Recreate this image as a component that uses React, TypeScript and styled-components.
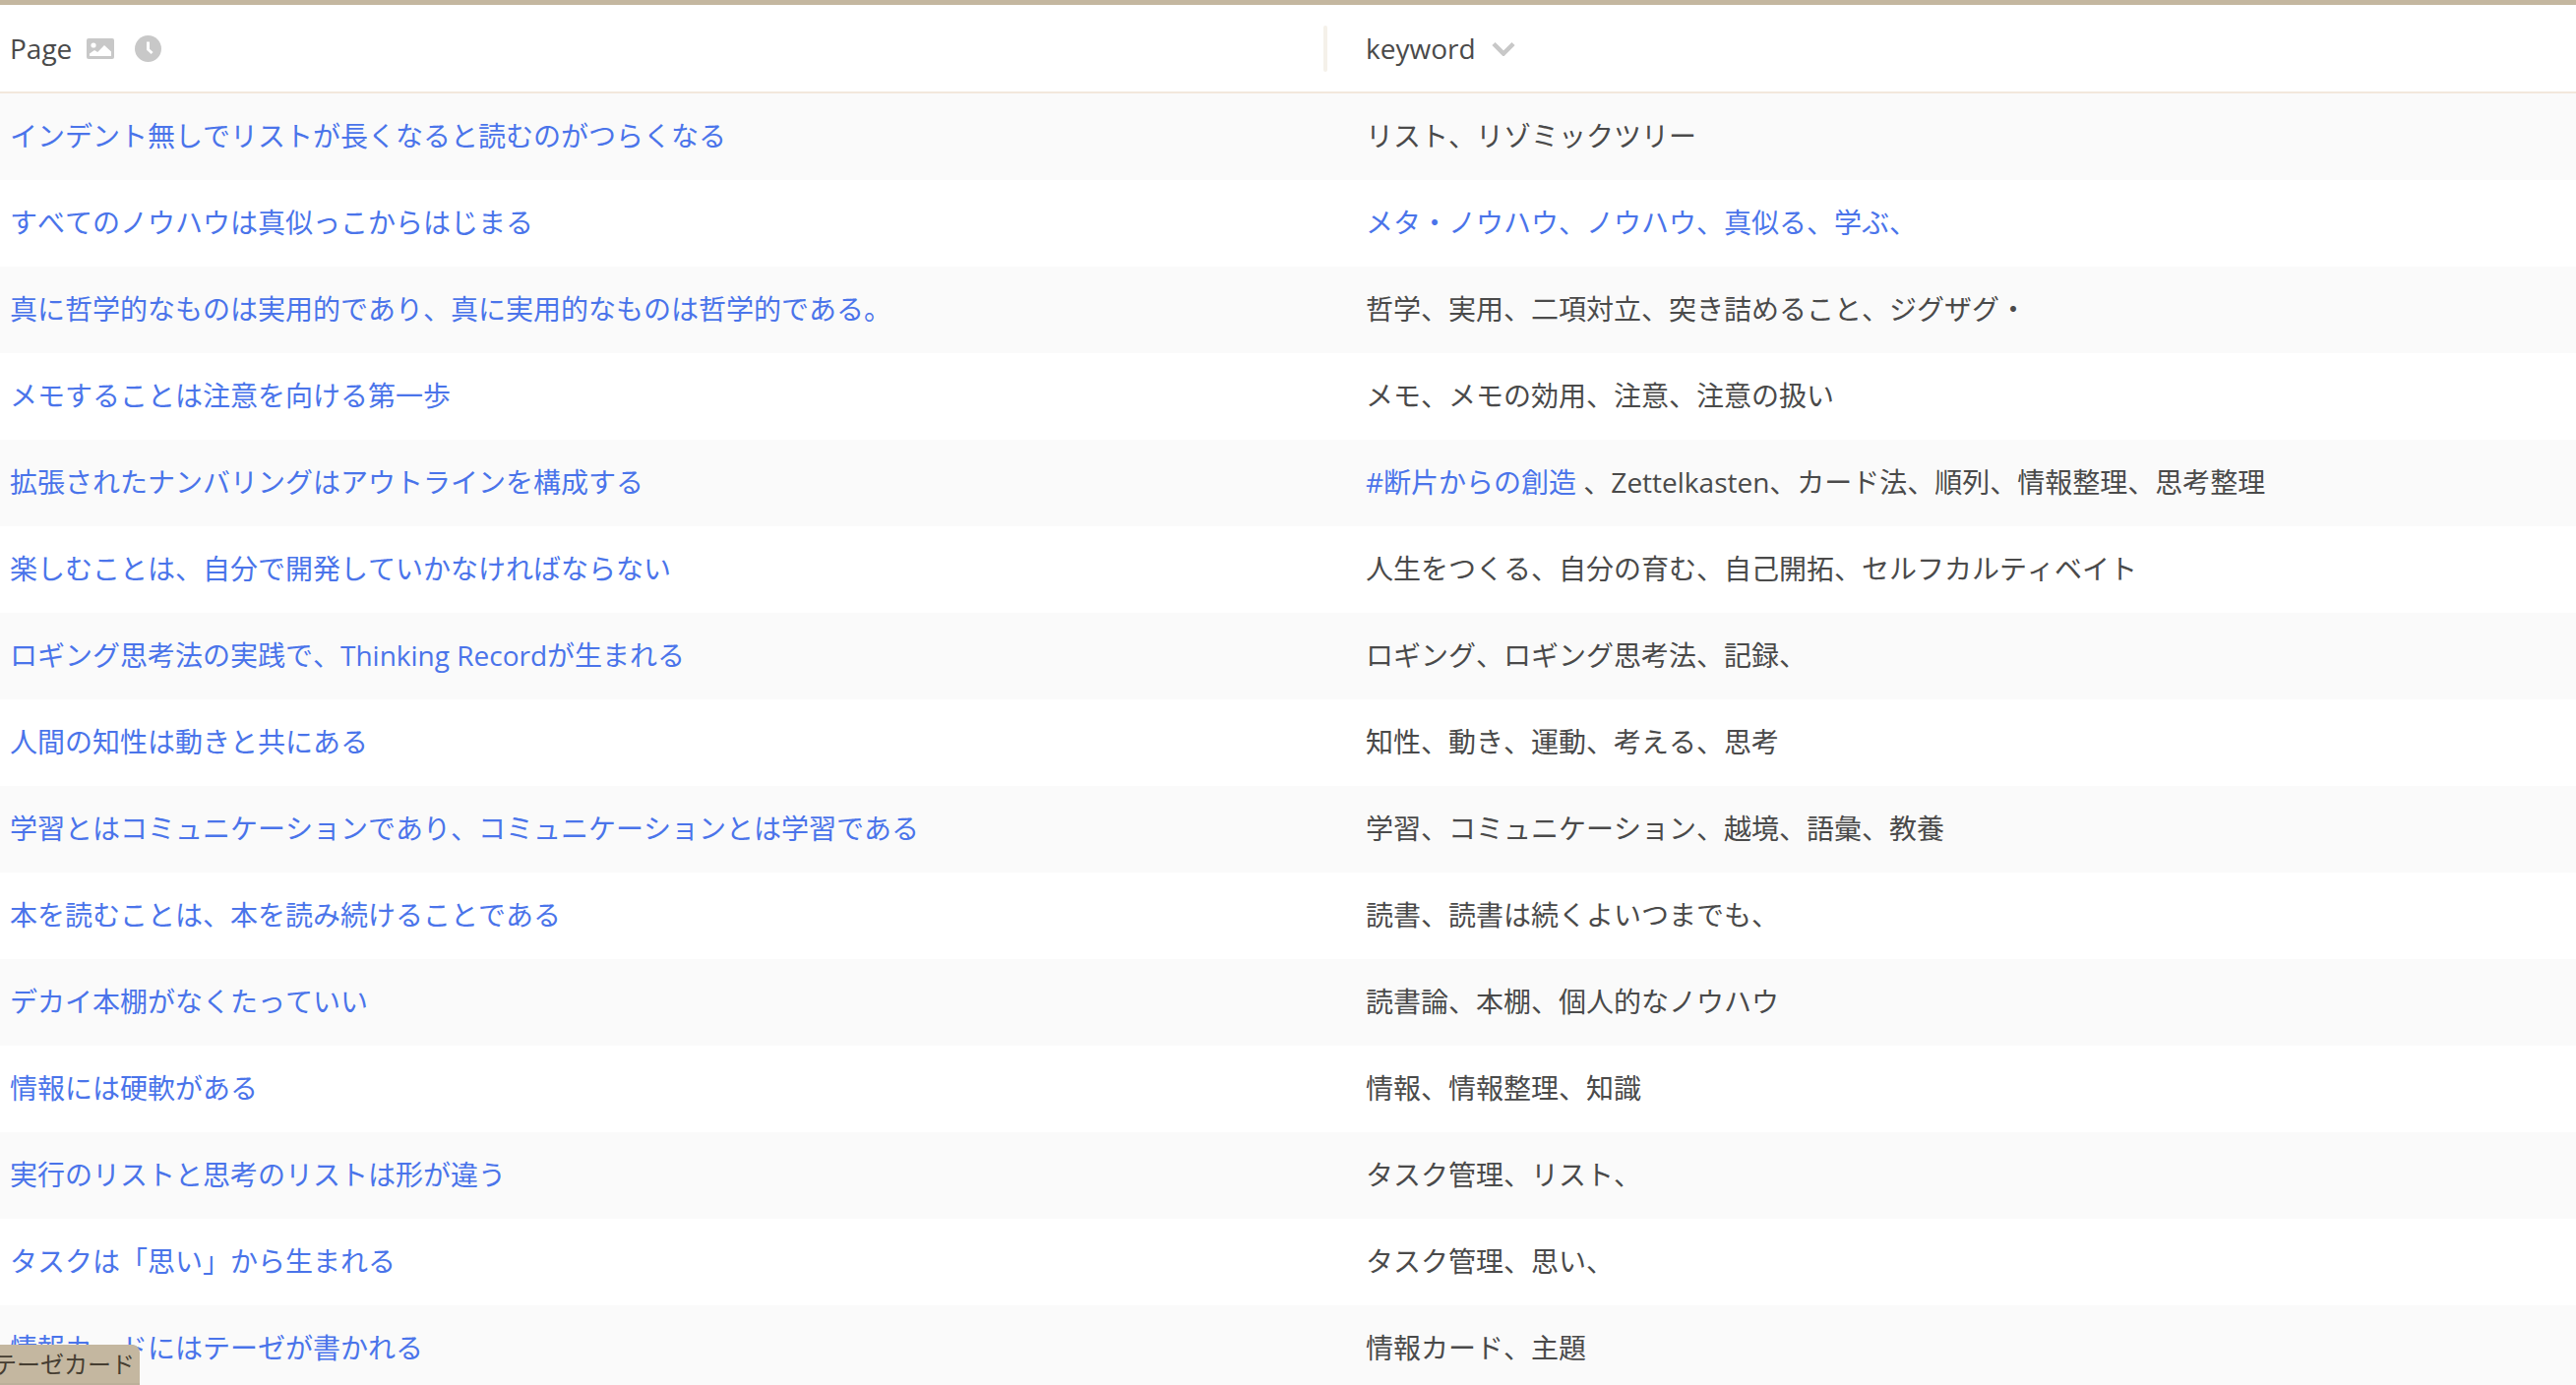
import React from "react";
import styled, { createGlobalStyle } from "styled-components";

const Global = createGlobalStyle`
  html, body { margin: 0; padding: 0; background: #fff; height: 100%; overflow: hidden; }
  body { font-family: "Open Sans", "Noto Sans CJK JP", sans-serif; font-size: 28px; color: #4a4a4a; }
  a { text-decoration: none; }
`;

const Page = styled.div`
  position: relative;
  width: 2618px;
  height: 1408px;
  overflow: hidden;
  border-top: 5px solid #c4b7a0;
  box-sizing: border-box;
`;

const Table = styled.div`
  display: flex;
  flex-direction: column;
`;

const HeaderRow = styled.div`
  display: grid;
  grid-template-columns: 1345px 4px 1fr;
  align-items: center;
  height: 88px;
  border-bottom: 2px solid #f2e8dc;
`;

const HeaderCell = styled.div<{ $inset: number }>`
  display: flex;
  align-items: center;
  padding-left: ${(p) => p.$inset}px;
  height: 100%;
`;

const HeaderLabel = styled.span`
  line-height: 1;
`;

const Divider = styled.div`
  width: 4px;
  height: 47px;
  border-radius: 2px;
  background: #f5f1ea;
`;

const IconImage = styled.svg`
  width: 28px;
  height: 21px;
  margin-left: 15px;
  display: block;
`;

const IconClock = styled.svg`
  width: 27px;
  height: 27px;
  margin-left: 21px;
  display: block;
`;

const IconChevron = styled.svg`
  width: 24px;
  height: 15px;
  margin-left: 16px;
  display: block;
`;

const Row = styled.div<{ $odd: boolean }>`
  display: grid;
  grid-template-columns: 1336px 1fr;
  align-items: center;
  height: 88px;
  box-sizing: border-box;
  padding-bottom: 4px;
  font-kerning: none;
  background: ${(p) => (p.$odd ? "#fafafa" : "#fff")};
`;

const PageCell = styled.div`
  padding-left: 10px;
  white-space: nowrap;
`;

const KeywordCell = styled.div`
  padding-left: 52px;
  white-space: nowrap;
`;

const Link = styled.a`
  color: #4a74ea;
`;

const Tag = styled.div`
  position: absolute;
  left: 0;
  bottom: 0;
  width: 142px;
  height: 41px;
  background: #c4b7a0;
  border-bottom: 2px solid #bcb09a;
  border-radius: 0 8px 0 0;
  color: #463e32;
  font-size: 24px;
  line-height: 40px;
  white-space: nowrap;
  overflow: hidden;
  direction: rtl;
  padding-right: 5px;
  box-sizing: border-box;
`;

type RowData = { page: string; keyword: React.ReactNode };

const rows: RowData[] = [
  { page: "インデント無しでリストが長くなると読むのがつらくなる", keyword: "リスト、リゾミックツリー" },
  { page: "すべてのノウハウは真似っこからはじまる", keyword: <Link>メタ・ノウハウ、ノウハウ、真似る、学ぶ、</Link> },
  { page: "真に哲学的なものは実用的であり、真に実用的なものは哲学的である。", keyword: "哲学、実用、二項対立、突き詰めること、ジグザグ・" },
  { page: "メモすることは注意を向ける第一歩", keyword: "メモ、メモの効用、注意、注意の扱い" },
  {
    page: "拡張されたナンバリングはアウトラインを構成する",
    keyword: (
      <>
        <Link>#断片からの創造</Link> 、Zettelkasten、カード法、順列、情報整理、思考整理
      </>
    ),
  },
  { page: "楽しむことは、自分で開発していかなければならない", keyword: "人生をつくる、自分の育む、自己開拓、セルフカルティベイト" },
  { page: "ロギング思考法の実践で、Thinking Recordが生まれる", keyword: "ロギング、ロギング思考法、記録、" },
  { page: "人間の知性は動きと共にある", keyword: "知性、動き、運動、考える、思考" },
  { page: "学習とはコミュニケーションであり、コミュニケーションとは学習である", keyword: "学習、コミュニケーション、越境、語彙、教養" },
  { page: "本を読むことは、本を読み続けることである", keyword: "読書、読書は続くよいつまでも、" },
  { page: "デカイ本棚がなくたっていい", keyword: "読書論、本棚、個人的なノウハウ" },
  { page: "情報には硬軟がある", keyword: "情報、情報整理、知識" },
  { page: "実行のリストと思考のリストは形が違う", keyword: "タスク管理、リスト、" },
  { page: "タスクは「思い」から生まれる", keyword: "タスク管理、思い、" },
  { page: "情報カードにはテーゼが書かれる", keyword: "情報カード、主題" },
];

export default function App() {
  return (
    <Page>
      <Global />
      <Table>
        <HeaderRow>
          <HeaderCell $inset={10}>
            <HeaderLabel>Page</HeaderLabel>
            <IconImage viewBox="0 0 28 21">
              <rect width="28" height="21" rx="2" fill="#c8c8c8" />
              <circle cx="7" cy="7" r="2.6" fill="#fff" />
              <path d="M3 18v-2.5l5-3.5 3.2 2L18 7l7 6.5V18z" fill="#fff" />
            </IconImage>
            <IconClock viewBox="0 0 27 27">
              <circle cx="13.5" cy="13.5" r="13.5" fill="#c8c8c8" />
              <path d="M12 6.5h3v7.2l3.6 3.4-2 2-4.6-4.4z" fill="#fff" />
            </IconClock>
          </HeaderCell>
          <Divider />
          <HeaderCell $inset={39}>
            <HeaderLabel>keyword</HeaderLabel>
            <IconChevron viewBox="0 0 24 15">
              <path d="M2 2.5l10 10 10-10" fill="none" stroke="#c8c8c8" strokeWidth="4.5" />
            </IconChevron>
          </HeaderCell>
        </HeaderRow>
        {rows.map((r, i) => (
          <Row key={r.page} $odd={i % 2 === 0}>
            <PageCell>
              <Link>{r.page}</Link>
            </PageCell>
            <KeywordCell>{r.keyword}</KeywordCell>
          </Row>
        ))}
      </Table>
      <Tag>テーゼカード</Tag>
    </Page>
  );
}
